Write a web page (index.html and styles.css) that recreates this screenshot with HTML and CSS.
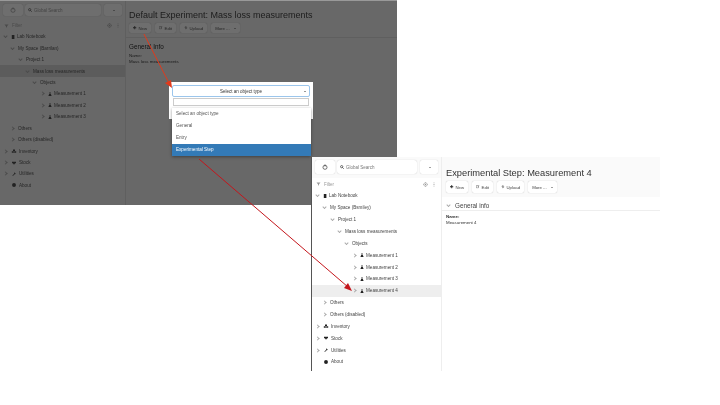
FILE: index.html
```html
<!DOCTYPE html>
<html lang="en">
<head>
  <meta charset="UTF-8" />
  <title>Lab Notebook steps</title>
  <link rel="stylesheet" href="styles.css">
</head>
<body>
  <svg class="defs" width="0" height="0">
    <symbol id="i-power" viewBox="0 0 10 10"><circle cx="5" cy="5.5" r="3.4" fill="none" stroke="currentColor" stroke-width="1.2" /><path d="M5 .8v3.4" stroke="currentColor" stroke-width="1.2" /></symbol>
    <symbol id="i-search" viewBox="0 0 10 10"><circle cx="4.2" cy="4.2" r="2.8" fill="none" stroke="currentColor" stroke-width="1.6" /><path d="M6.3 6.3 9.3 9.3" stroke="currentColor" stroke-width="1.8" /></symbol>
    <symbol id="i-filter" viewBox="0 0 10 10"><path d="M0 1h10L6.2 5.4V9L3.8 8V5.4z" fill="currentColor" /></symbol>
    <symbol id="i-target" viewBox="0 0 10 10"><circle cx="5" cy="5" r="3.4" fill="none" stroke="currentColor" stroke-width="1.2" /><circle cx="5" cy="5" r="1.3" fill="currentColor" /><path d="M5 0v2M5 8v2M0 5h2M8 5h2" stroke="currentColor" /></symbol>
    <symbol id="i-dots" viewBox="0 0 4 10"><path d="M1.2 1h1.6v1.6H1.2zM1.2 4.2h1.6v1.6H1.2zM1.2 7.4h1.6V9H1.2z" fill="currentColor" /></symbol>
    <symbol id="i-book" viewBox="0 0 10 10"><path d="M2 0h6.5v10H2z" fill="currentColor" /></symbol>
    <symbol id="i-flask" viewBox="0 0 10 10"><circle cx="5" cy="2.6" r="1.9" fill="currentColor" /><path d="M1 10 3 5.2h4L9 10z" fill="currentColor" /></symbol>
    <symbol id="i-boxes" viewBox="0 0 12 10"><path d="M3.5 1h5v4h-5zM.5 5.5h5v4h-5zM6.5 5.5h5v4h-5z" fill="currentColor" /></symbol>
    <symbol id="i-store" viewBox="0 0 10 10"><path d="M0 2h10v3.5H7V8H3V5.5H0z" fill="currentColor" /></symbol>
    <symbol id="i-tool" viewBox="0 0 10 10"><path d="M1 9 5.5 4.5 5 2.2 7.2.8 7 3l1.5.6L10 2.4 9 5 6.6 5.4 2.2 10z" fill="currentColor" /></symbol>
    <symbol id="i-info" viewBox="0 0 10 10"><circle cx="5" cy="5" r="4.8" fill="currentColor" /></symbol>
    <symbol id="i-plus" viewBox="0 0 10 10"><path d="M3.8 0h2.4v3.8H10v2.4H6.2V10H3.8V6.2H0V3.8h3.8z" fill="currentColor" /></symbol>
    <symbol id="i-edit" viewBox="0 0 10 10"><path d="M1 1.5h6v7H1zM6 5 9.5 1" fill="none" stroke="currentColor" /></symbol>
    <symbol id="i-upload" viewBox="0 0 10 10"><path d="M2 4.5a3.2 3.2 0 1 1 1 3M5 3v5M3.6 4.4 5 3l1.4 1.4" fill="none" stroke="currentColor" /></symbol>
  </svg>

  <section class="shot shot-dark">
    <aside class="side">
      <div class="topbar">
        <span class="tool"><svg class="ico"><use href="#i-power" /></svg></span>
        <span class="search"><svg class="ico"><use href="#i-search" /></svg>Global Search</span>
        <span class="tool tool-small"><i class="caret"></i></span>
      </div>
      <div class="filter">
        <span class="filter-start"><svg class="ico"><use href="#i-filter" /></svg>Filter</span>
        <span class="filter-end"><svg class="ico"><use href="#i-target" /></svg><svg class="ico dots"><use href="#i-dots" /></svg></span>
      </div>
      <ul class="tree">
        <li class="d0"><i class="chev open"></i><svg class="ico"><use href="#i-book" /></svg><span>Lab Notebook</span></li>
        <li class="d1"><i class="chev open"></i><span>My Space (Barrilan)</span></li>
        <li class="d2"><i class="chev open"></i><span>Project 1</span></li>
        <li class="d3 on"><i class="chev open"></i><span>Mass loss measurements</span></li>
        <li class="d4"><i class="chev open"></i><span>Objects</span></li>
        <li class="d5"><i class="chev"></i><svg class="ico"><use href="#i-flask" /></svg><span>Measurement 1</span></li>
        <li class="d5"><i class="chev"></i><svg class="ico"><use href="#i-flask" /></svg><span>Measurement 2</span></li>
        <li class="d5"><i class="chev"></i><svg class="ico"><use href="#i-flask" /></svg><span>Measurement 3</span></li>
        <li class="d1"><i class="chev"></i><span>Others</span></li>
        <li class="d1"><i class="chev"></i><span>Others (disabled)</span></li>
        <li class="d0"><i class="chev"></i><svg class="ico wide"><use href="#i-boxes" /></svg><span>Inventory</span></li>
        <li class="d0"><i class="chev"></i><svg class="ico wide"><use href="#i-store" /></svg><span>Stock</span></li>
        <li class="d0"><i class="chev"></i><svg class="ico wide"><use href="#i-tool" /></svg><span>Utilities</span></li>
        <li class="d0"><i class="chev none"></i><svg class="ico wide"><use href="#i-info" /></svg><span>About</span></li>
      </ul>
    </aside>
    <main class="body">
      <div class="head">
        <h1>Default Experiment: Mass loss measurements</h1>
        <div class="btns">
          <span class="btn"><svg class="ico"><use href="#i-plus" /></svg>New</span>
          <span class="btn"><svg class="ico"><use href="#i-edit" /></svg>Edit</span>
          <span class="btn"><svg class="ico"><use href="#i-upload" /></svg>Upload</span>
          <span class="btn">More ...<i class="caret"></i></span>
        </div>
      </div>
      <h2>General Info</h2>
      <p class="field">Name:<br>Mass loss measurements</p>
    </main>
    <div class="modal">
      <div class="select">Select an object type<i class="caret"></i></div>
      <div class="find"></div>
    </div>
    <ul class="menu">
      <li>Select an object type</li>
      <li>General</li>
      <li>Entry</li>
      <li class="picked">Experimental Step</li>
    </ul>
  </section>

  <section class="shot shot-light">
    <aside class="side">
      <div class="topbar">
        <span class="tool"><svg class="ico"><use href="#i-power" /></svg></span>
        <span class="search"><svg class="ico"><use href="#i-search" /></svg>Global Search</span>
        <span class="tool tool-small"><i class="caret"></i></span>
      </div>
      <div class="filter">
        <span class="filter-start"><svg class="ico"><use href="#i-filter" /></svg>Filter</span>
        <span class="filter-end"><svg class="ico"><use href="#i-target" /></svg><svg class="ico dots"><use href="#i-dots" /></svg></span>
      </div>
      <ul class="tree">
        <li class="d0"><i class="chev open"></i><svg class="ico"><use href="#i-book" /></svg><span>Lab Notebook</span></li>
        <li class="d1"><i class="chev open"></i><span>My Space (Bsmiley)</span></li>
        <li class="d2"><i class="chev open"></i><span>Project 1</span></li>
        <li class="d3"><i class="chev open"></i><span>Mass loss measurements</span></li>
        <li class="d4"><i class="chev open"></i><span>Objects</span></li>
        <li class="d5"><i class="chev"></i><svg class="ico"><use href="#i-flask" /></svg><span>Measurement 1</span></li>
        <li class="d5"><i class="chev"></i><svg class="ico"><use href="#i-flask" /></svg><span>Measurement 2</span></li>
        <li class="d5"><i class="chev"></i><svg class="ico"><use href="#i-flask" /></svg><span>Measurement 3</span></li>
        <li class="d5 on"><i class="chev"></i><svg class="ico"><use href="#i-flask" /></svg><span>Measurement 4</span></li>
        <li class="d1"><i class="chev"></i><span>Others</span></li>
        <li class="d1"><i class="chev"></i><span>Others (disabled)</span></li>
        <li class="d0"><i class="chev"></i><svg class="ico wide"><use href="#i-boxes" /></svg><span>Inventory</span></li>
        <li class="d0"><i class="chev"></i><svg class="ico wide"><use href="#i-store" /></svg><span>Stock</span></li>
        <li class="d0"><i class="chev"></i><svg class="ico wide"><use href="#i-tool" /></svg><span>Utilities</span></li>
        <li class="d0"><i class="chev none"></i><svg class="ico wide"><use href="#i-info" /></svg><span>About</span></li>
      </ul>
    </aside>
    <main class="body">
      <div class="head">
        <h1>Experimental Step: Measurement 4</h1>
        <div class="btns">
          <span class="btn"><svg class="ico"><use href="#i-plus" /></svg>New</span>
          <span class="btn"><svg class="ico"><use href="#i-edit" /></svg>Edit</span>
          <span class="btn"><svg class="ico"><use href="#i-upload" /></svg>Upload</span>
          <span class="btn">More ...<i class="caret"></i></span>
        </div>
      </div>
      <h2><i class="chev open"></i>General info</h2>
      <p class="field"><b>Name:</b><br>Measurement 4</p>
    </main>
  </section>

  <svg class="arrows" viewBox="0 0 720 405">
    <path class="a1" d="M144 34 L169 83" />
    <path class="a1-head" d="M172 88 L165 83 L171 80 Z" />
    <path class="a2" d="M199 159 L348 287" />
    <path class="a2-head" d="M352 291 L344 288 L348 283 Z" />
  </svg>
</body>
</html>
```

FILE: styles.css
```css
body {
  margin: 0;
  width: 720px;
  height: 405px;
  overflow: hidden;
  background: #fff;
  font-family: "Liberation Sans", Arial, sans-serif;
  position: relative;
}
.defs { position: absolute; }
.shot {
  position: absolute;
  display: flex;
  overflow: hidden;
  filter: blur(0.4px);
  box-sizing: border-box;
}
.shot-dark {
  left: 0;
  top: 0;
  width: 397px;
  height: 205px;
  background: #686868;
  color: #262626;
  border-top: 1px solid #999;
  --line: #5f5f5f;
  --tool: #6e6e6e;
  --hi: #5c5c5c;
  --bar: #686868;
  --row: 11.45px;
  --chev: #4c4c4c;
}
.shot-light {
  left: 311px;
  top: 157px;
  width: 349px;
  height: 214px;
  background: #fff;
  color: #444;
  border-left: 1px solid #555;
  --line: #eee;
  --tool: #fff;
  --hi: #eee;
  --bar: #fafafa;
  --row: 11.86px;
  --chev: #aaa;
}
.ico {
  width: 4px;
  height: 4px;
  flex: none;
  color: #222;
}
.ico.wide { width: 6px; }
.ico.dots { width: 2px; height: 5px; }

/* sidebar */
.side {
  width: 125px;
  flex: none;
  border-right: 1px solid var(--line);
}
.shot-light .side { width: 129px; }
.topbar {
  display: flex;
  gap: 2px;
  padding: 3px 3px 4px;
  height: 12px;
  background: var(--bar);
}
.shot-light .topbar { height: 14px; }
.tool {
  width: 20px;
  flex: none;
  background: var(--tool);
  border-radius: 2px;
  box-shadow: 0 0 1px rgba(0, 0, 0, 0.25);
  display: flex;
  align-items: center;
  justify-content: center;
}
.tool .ico { width: 6px; height: 6px; color: #444; }
.tool-small { width: 18px; margin-left: 1px; }
.search {
  flex: 1;
  display: flex;
  align-items: center;
  gap: 2px;
  padding-left: 3px;
  background: var(--tool);
  border-radius: 3px;
  box-shadow: 0 0 1px rgba(0, 0, 0, 0.25);
  font-size: 4.5px;
  color: #444;
}
.shot-light .search { color: #777; }
.caret {
  display: inline-block;
  border: 1.2px solid transparent;
  border-top-color: currentColor;
  border-bottom: 0;
  margin-left: 2px;
}
.filter {
  display: flex;
  justify-content: space-between;
  align-items: center;
  font-size: 4.5px;
  padding: 0 6px 0 4px;
  height: 11px;
  color: #4a4a4a;
}
.shot-light .filter { height: 12px; color: #999; }
.filter-start, .filter-end { display: flex; align-items: center; gap: 3px; }
.filter-start .ico { width: 5px; color: inherit; }
.filter-end { gap: 5px; }
.filter-end .ico { width: 5px; height: 5px; color: #4a4a4a; }
.shot-light .filter-end .ico { color: #999; }
.filter-end .ico.dots { width: 2px; }

.tree {
  list-style: none;
  margin: 0;
  padding: 0;
  font-size: 4.6px;
}
.tree li {
  display: flex;
  align-items: center;
  height: var(--row);
  white-space: nowrap;
}
.tree .ico { margin-right: 2px; }
.tree .on { background: var(--hi); }
.chev {
  display: inline-block;
  width: 2px;
  height: 2px;
  flex: none;
  border-right: 1px solid var(--chev);
  border-bottom: 1px solid var(--chev);
  transform: rotate(-45deg);
  margin-right: 4px;
  margin-left: 1px;
}
.chev.open { transform: translateY(-0.5px) rotate(45deg); }
.chev.none { visibility: hidden; }
.d0 { padding-left: 3px; }
.d1 { padding-left: 10px; }
.d2 { padding-left: 18px; }
.d3 { padding-left: 25px; }
.d4 { padding-left: 32px; }
.d5 { padding-left: 40px; }

/* main area */
.body { flex: 1; min-width: 0; }
.head {
  padding: 8px 3px 4px;
  border-bottom: 1px solid var(--line);
  background: var(--bar);
}
.shot-light .head { padding: 10px 4px 4px; border-bottom: 0; }
.head h1 {
  font-size: 9px;
  font-weight: normal;
  margin: 0 0 1px;
  line-height: 13px;
  color: #1c1c1c;
  white-space: nowrap;
}
.shot-light .head h1 { font-size: 9.3px; color: #333; }
.btns { display: flex; gap: 4px; }
.btn {
  display: flex;
  align-items: center;
  gap: 2px;
  height: 10px;
  padding: 0 4px;
  font-size: 4.3px;
  background: var(--tool);
  border-radius: 2px;
  box-shadow: 0 0 1px rgba(0, 0, 0, 0.3);
  white-space: nowrap;
}
.shot-light .btn { height: 12px; }
.btn .ico { width: 3.5px; height: 3.5px; }
.body h2 {
  display: flex;
  align-items: center;
  font-size: 6.3px;
  font-weight: normal;
  margin: 4px 3px 2px;
  line-height: 9px;
  color: #111;
}
.shot-light .body h2 {
  margin: 4px 0 3px;
  padding-left: 4px;
  border-bottom: 1px solid #eee;
  color: #444;
}
.body h2 .chev { margin-right: 5px; }
.field {
  margin: 0 3px;
  font-size: 4.4px;
  line-height: 6px;
  color: #1a1a1a;
}
.shot-light .field { margin: 0 4px; color: #333; }

/* dialog */
.modal {
  position: absolute;
  left: 169px;
  top: 81px;
  width: 144px;
  height: 37px;
  background: #fff;
  padding: 3px;
  box-sizing: border-box;
}
.select {
  height: 12px;
  line-height: 11px;
  border: 1px solid #9cc6ec;
  border-radius: 2px;
  font-size: 4.5px;
  text-align: center;
  position: relative;
  color: #333;
  box-sizing: border-box;
}
.select .caret { position: absolute; right: 3px; top: 5px; }
.find {
  height: 8px;
  border: 1px solid #ccc;
  margin: 1px 1px 0;
  box-sizing: border-box;
}
.menu {
  position: absolute;
  left: 172px;
  top: 107px;
  width: 139px;
  margin: 0;
  padding: 0;
  list-style: none;
  background: #fff;
  font-size: 4.6px;
  color: #555;
  box-shadow: 0 1px 3px rgba(0, 0, 0, 0.4);
}
.menu li {
  height: 12px;
  line-height: 12px;
  padding-left: 4px;
}
.menu .picked {
  background: #337ab7;
  color: #fff;
}

/* arrows sit over both screenshots */
.arrows {
  position: absolute;
  left: 0;
  top: 0;
  width: 720px;
  height: 405px;
}
.a1 { stroke: #e03a1c; stroke-width: 1; fill: none; }
.a1-head { fill: #e03a1c; }
.a2 { stroke: #c4161c; stroke-width: 1; fill: none; }
.a2-head { fill: #c4161c; }
```
